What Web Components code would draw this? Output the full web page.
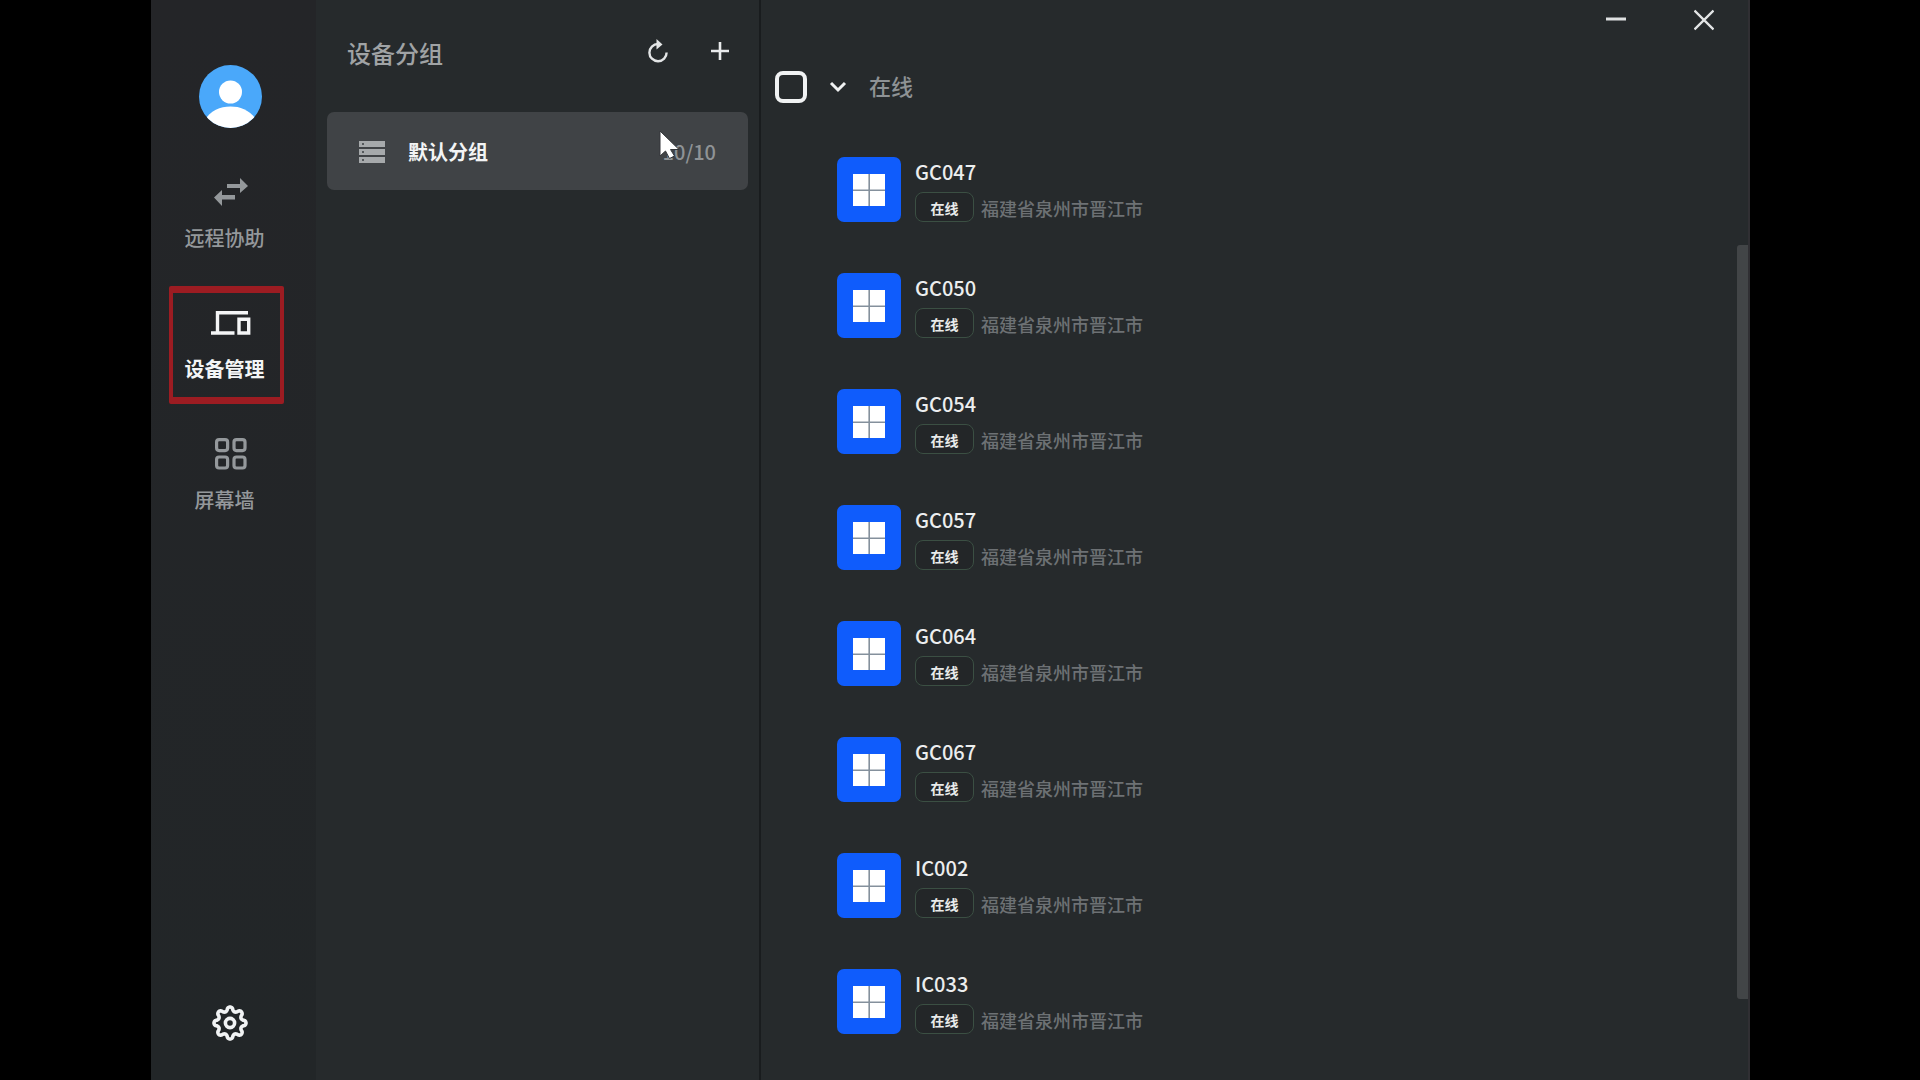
<!DOCTYPE html>
<html lang="zh-CN">
<head>
<meta charset="utf-8">
<title>设备管理</title>
<style>
html,body{margin:0;height:100%;background:#000}
body{display:grid;grid-template-columns:151px 1fr 170px;font-family:"Noto Sans CJK SC","Noto Sans",sans-serif;font-weight:500;color:#e6e8e9}
app-window{grid-column:2}
</style>
</head>
<body>
<app-window></app-window>
<script>
const define = (name, html, setup) => {
  const t = document.createElement('template');
  t.innerHTML = html;
  customElements.define(name, class extends HTMLElement {
    connectedCallback() {
      if (this.shadowRoot) return;
      this.attachShadow({mode: 'open'}).append(t.content.cloneNode(true));
      if (setup) setup(this, this.shadowRoot);
    }
  });
};
const reset = `:host,*{box-sizing:border-box}button{background:none;border:0;padding:0;margin:0;font:inherit;color:inherit;cursor:default}svg{display:block}`;

define('user-avatar', `
<style>${reset}:host{display:block;width:63px;height:63px}</style>
<svg width="63" height="63" viewBox="0 0 63 63" role="img" aria-label="头像">
  <clipPath id="c"><circle cx="31.5" cy="31.5" r="31.5"/></clipPath>
  <g clip-path="url(#c)"><path fill="#4aa8fa" d="M0 0h63v63H0z"/>
  <circle cx="31.5" cy="27" r="11.5" fill="#fff"/>
  <path fill="#fff" d="M4 57C12 45 21 41.500 31.500 41.500S51 45 59 57V63H4z"/></g>
</svg>`);

define('nav-item', `
<style>
${reset}
:host{display:block;color:#94989b}
:host([active]){color:#f4f5f6}
button{display:flex;flex-direction:column;align-items:center;gap:18px;width:115px;height:118px;padding-top:14px;border:solid transparent;border-width:7px 4px;border-radius:2px}
:host([active]) button{border-color:#9c1c22}
.icon{height:32px;display:flex;align-items:center;padding-left:8px}
.label{font-size:20px;line-height:24px;padding-right:4px}
:host([active]) .label{font-weight:700}
</style>
<button type="button"><span class="icon"><slot name="icon"></slot></span><span class="label"><slot></slot></span></button>`,
(el, root) => { if (el.hasAttribute('active')) root.querySelector('button').setAttribute('aria-current', 'page'); });

define('side-bar', `
<style>
${reset}
:host{display:flex;flex-direction:column;justify-content:space-between;width:165px;padding:65px 0 39px 18px;background:linear-gradient(#242528,#222628)}
nav{display:flex;flex-direction:column;gap:13px;margin-top:27px}
user-avatar{margin-left:30px}
.settings{margin-left:43px;width:36px;height:36px}
</style>
<div>
  <user-avatar></user-avatar>
  <nav aria-label="主导航">
    <nav-item><svg slot="icon" width="34" height="28" viewBox="0 0 34 28" fill="currentColor"><path d="M13 6h13V0l8 8-8 7V10H13zM21 17v4.500H8V28L0 19.500 8 12v5z"/></svg>远程协助</nav-item>
    <nav-item active><svg slot="icon" width="40" height="26" viewBox="0 0 40 26" fill="none" stroke="currentColor" stroke-width="3.400"><path d="M37 2.800H6.500V22M0 23h23.500"/><path d="M28 9.300h9.700V23H28z"/></svg>设备管理</nav-item>
    <nav-item><svg slot="icon" width="32" height="32" viewBox="0 0 32 32" fill="none" stroke="currentColor" stroke-width="3.200"><rect x="1.600" y="1.600" width="11" height="11" rx="2.500"/><rect x="19" y="1.600" width="11" height="11" rx="2.500"/><rect x="1.600" y="19" width="11" height="11" rx="2.500"/><rect x="19" y="19" width="11" height="11" rx="2.500"/></svg>屏幕墙</nav-item>
  </nav>
</div>
<button type="button" class="settings" aria-label="设置"><svg width="36" height="36" viewBox="0 0 36 36" fill="none" stroke="#f1f3f4" stroke-width="3.600" stroke-linejoin="round"><path id="gear"/><circle cx="18" cy="18" r="4.600"/></svg></button>`,
(el, root) => {
  // eight rounded teeth around the hub
  let d = '';
  for (let i = 0; i <= 144; i++) {
    const a = i / 144 * Math.PI * 2;
    const w = Math.cos(8 * a);
    const r = 14 + 2 * Math.sign(w) * Math.pow(Math.abs(w), .6);
    d += (i ? 'L' : 'M') + (18 + r * Math.cos(a)).toFixed(2) + ' ' + (18 + r * Math.sin(a)).toFixed(2);
  }
  root.querySelector('#gear').setAttribute('d', d + 'Z');
});

define('group-card', `
<style>
${reset}
:host{display:block;position:relative}
button{display:flex;align-items:center;width:100%;height:78px;padding:2px 32px 0;border-radius:7px;background:#404346;font-size:20px;line-height:28px}
.name{margin-left:23px;color:#f3f4f5;font-weight:700}
.count{margin-left:auto;color:#8f9396}
.cursor{position:absolute;left:332px;top:18px}
</style>
<button type="button">
  <svg width="26" height="22" viewBox="0 0 26 22"><path fill="#a6a9ab" d="M0 0h26v6H0zM0 8h26v6H0zM0 16h26v6H0z"/><path fill="#55595c" d="M3 2h2v2H3zM3 10h2v2H3zM3 18h2v2H3z"/></svg>
  <span class="name"><slot></slot></span><span class="count"><slot name="count"></slot></span>
</button>
<svg class="cursor" width="22" height="30" viewBox="0 0 22 30" aria-hidden="true"><path fill="#fff" stroke="#34373a" stroke-width="1" d="M1 1v25l5.500-5 4 7.500 5-2.500-4-6.500H20z"/></svg>`);

define('group-panel', `
<style>
${reset}
:host{display:flex;flex-direction:column;width:445px;padding:36px 11px 0;background:#262a2c;border-right:2px solid #191c1e}
header{display:flex;align-items:center;height:34px;padding:0 18px 0 20px}
h2{margin:0 auto 0 0;font-size:24px;line-height:34px;font-weight:500;color:#a0a3a5}
.tools{display:flex;gap:42px;align-items:center;height:30px;margin-bottom:4px}
group-card{margin-top:42px}
</style>
<header><h2>设备分组</h2>
<div class="tools">
<button type="button" aria-label="刷新"><svg width="20" height="24" viewBox="0 0 20 24" fill="none" stroke="#e3e5e6" stroke-width="2.400"><path d="M10 5A8.600 8.600 0 1 0 18.600 13.500"/><path fill="#e3e5e6" stroke="none" d="M8.500 0L14.500 5.500 8.500 10.500z"/></svg></button>
<button type="button" aria-label="添加"><svg width="20" height="20" viewBox="0 0 20 20" stroke="#e9ebec" stroke-width="2.600"><path d="M10 1v18M1 10h18"/></svg></button>
</div></header>
<group-card>默认分组<span slot="count">10/10</span></group-card>`);

define('status-tag', `
<style>${reset}:host{display:flex;align-items:center;justify-content:center;width:59px;height:30px;padding-top:2px;border:1px solid #3b4f43;border-radius:8px;background:#232628;font-size:14px;line-height:20px;font-weight:700;color:#e9ebea}</style><slot></slot>`);

define('device-row', `
<style>
${reset}
:host{display:flex;gap:14px;height:65px}
.os{width:64px;height:65px;border-radius:7px;background:#0f5cfc;display:flex;align-items:center;justify-content:center}
.info{display:flex;flex-direction:column;justify-content:space-between}
.name{font-size:20px;line-height:30px;color:#eceeef}
.meta{display:flex;align-items:center;gap:7px}
.place{font-size:18px;line-height:28px;color:#6d7174;margin-top:2px}
</style>
<div class="os"><svg width="32" height="32" viewBox="0 0 32 32" role="img" aria-label="Windows"><path fill="#84909c" d="M0 0h32v32H0z"/><path fill="#fff" d="M0 0h15.400v15.400H0zM17 0h15v15.400H17zM0 17h15.400v15H0zM17 17h15v15H17z"/></svg></div>
<div class="info"><span class="name"><slot></slot></span>
<div class="meta"><status-tag>在线</status-tag><span class="place"><slot name="place"></slot></span></div></div>`);

define('window-controls', `
<style>${reset}:host{display:flex;justify-content:flex-end;height:40px;gap:68px;padding-right:34px}button{width:20px;height:40px}</style>
<button type="button" aria-label="最小化"><svg width="20" height="40" viewBox="0 0 20 40"><path stroke="#dfe1e2" stroke-width="3" d="M0 19h20"/></svg></button>
<button type="button" aria-label="关闭"><svg width="20" height="40" viewBox="0 0 20 40"><path stroke="#e3e5e6" stroke-width="2.400" d="M0.500 10.500l19 19M19.500 10.500l-19 19"/></svg></button>`);

define('scroll-thumb', `
<style>:host{display:block;position:absolute;right:0;top:245px;bottom:81px;width:11px;background:#424547;border-radius:3px 0 0 3px}</style>`);

define('device-panel', `
<style>
${reset}
:host{display:block;position:relative;flex:1;min-width:0;overflow:hidden;background:#262a2c;border-right:2px solid #302f33}
.head{display:flex;align-items:center;height:34px;margin-top:30px;padding-left:14px}
input{appearance:none;width:32px;height:32px;margin:0;border:4px solid #f0f2f3;border-radius:8px}
.fold{margin:0 22px}
label{font-size:22px;line-height:32px;padding-bottom:4px;color:#8e9295}
ul{list-style:none;margin:0;padding:53px 0 0 76px;display:flex;flex-direction:column;gap:51px}
</style>
<window-controls></window-controls>
<div class="head"><input type="checkbox" id="all"><button class="fold" type="button" aria-label="折叠" aria-expanded="true"><svg width="18" height="12" viewBox="0 0 18 12" fill="none" stroke="#eff1f2" stroke-width="3"><path d="M2 2l7 7 7-7"/></svg></button><label for="all">在线</label></div>
<ul></ul>
<scroll-thumb></scroll-thumb>`,
(el, root) => {
  root.querySelector('ul').innerHTML = ['GC047','GC050','GC054','GC057','GC064','GC067','IC002','IC033']
    .map(n => `<li><device-row>${n}<span slot="place">福建省泉州市晋江市</span></device-row></li>`).join('');
});

define('app-window', `
<style>:host{display:flex;height:100vh;min-width:0}side-bar,group-panel{flex:none}</style>
<side-bar></side-bar><group-panel></group-panel><device-panel></device-panel>`);
</script>
</body>
</html>
